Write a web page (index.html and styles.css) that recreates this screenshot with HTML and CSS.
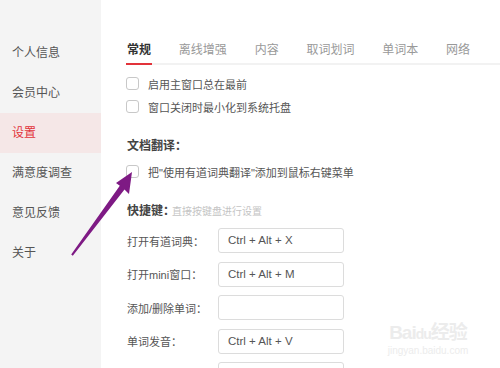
FILE: index.html
```html
<!DOCTYPE html>
<html>
<head>
    <title>设置</title>
    <meta charset="utf-8">
    <link rel="stylesheet" href="styles.css">
</head>
<body>
  <div class="page">
    <ul class="side">
      <li>个人信息</li>
      <li>会员中心</li>
      <li class="on">设置</li>
      <li>满意度调查</li>
      <li>意见反馈</li>
      <li>关于</li>
    </ul>

    <div class="main">
      <div class="tabs">
        <span class="tab active">常规</span>
        <span class="tab">离线增强</span>
        <span class="tab">内容</span>
        <span class="tab">取词划词</span>
        <span class="tab">单词本</span>
        <span class="tab">网络</span>
      </div>

      <div class="checks first">
        <label class="check"><i class="box"></i>启用主窗口总在最前</label>
        <label class="check"><i class="box"></i>窗口关闭时最小化到系统托盘</label>
      </div>

      <h3 class="title">文档翻译：</h3>
      <div class="checks">
        <label class="check"><i class="box"></i>把&quot;使用有道词典翻译&quot;添加到鼠标右键菜单</label>
      </div>

      <h3 class="title">快捷键：<span class="hint">直接按键盘进行设置</span></h3>
      <div class="keys">
        <div class="key-row"><span class="key-name">打开有道词典：</span><span class="key-input">Ctrl + Alt + X</span></div>
        <div class="key-row"><span class="key-name">打开mini窗口：</span><span class="key-input">Ctrl + Alt + M</span></div>
        <div class="key-row"><span class="key-name">添加/删除单词：</span><span class="key-input"></span></div>
        <div class="key-row"><span class="key-name">单词发音：</span><span class="key-input">Ctrl + Alt + V</span></div>
        <div class="key-row"><span class="key-name">截屏翻译：</span><span class="key-input"></span></div>
      </div>
    </div>

    <!-- overlays from the screenshot -->
    <svg class="arrow" width="500" height="368" viewBox="0 0 500 368">
      <polygon points="132,172 129,194 124.5,189.5 72.8,255.8 71.2,254.4 119.8,185.8 116,183" fill="#7e1a84"/>
    </svg>
    <div class="mark">
      <div class="mark-logo">Bai<b>du</b>经验</div>
      <div class="mark-url">jingyan.baidu.com</div>
    </div>
  </div>
</body>
</html>
```

FILE: styles.css
```css
body {
    margin: 0;
    background: #fff;
    font-family: "Liberation Sans", "Noto Sans CJK SC", sans-serif;
}

.page {
    position: relative;
    width: 500px;
    height: 368px;
    overflow: hidden;
    display: flex;
}

.side {
    width: 101px;
    flex: none;
    margin: 0;
    padding: 33px 0 0;
    list-style: none;
    background: #f4f4f4;
}
.side li {
    height: 40px;
    line-height: 40px;
    padding-left: 12px;
    font-size: 12px;
    color: #555;
}
.side li.on {
    background: #f5e7e7;
    color: #e2333a;
}

.main {
    flex: 1;
    padding: 40px 0 0 25px;
}

.tabs {
    display: flex;
    gap: 25.8px;
    border-bottom: 2px solid #f2f2f2;
}
.tab {
    font-size: 12px;
    line-height: 20px;
    padding: 0 1px 3px;
    margin-bottom: -2px;
    border-bottom: 2px solid transparent;
    color: #999;
}
.tab.active {
    color: #333;
    font-weight: bold;
    border-bottom-color: #e2333a;
}

.checks.first {
    margin-top: 7px;
}
.checks {
    margin-top: 4px;
}
.check {
    display: flex;
    align-items: center;
    height: 23px;
    font-size: 11px;
    color: #555;
}
.box {
    width: 11px;
    height: 11px;
    border: 1px solid #c8c8c8;
    border-radius: 3px;
    margin-right: 9px;
    background: #fff;
}

.title {
    margin: 18px 0 0 1px;
    font-size: 12px;
    line-height: 20px;
    font-weight: bold;
    color: #444;
}
.hint {
    margin-left: -3px;
    font-weight: normal;
    font-size: 10px;
    color: #c4c4c4;
}

.keys {
    margin-top: 6px;
    display: flex;
    flex-direction: column;
    gap: 8.5px;
}
.key-row {
    display: flex;
    align-items: center;
    height: 25px;
}
.key-name {
    width: 91px;
    padding-left: 1px;
    font-size: 11px;
    color: #555;
}
.key-input {
    box-sizing: border-box;
    width: 126px;
    height: 25px;
    line-height: 23px;
    padding-left: 9px;
    border: 1px solid #dcdcdc;
    border-radius: 3px;
    font-size: 11.5px;
    color: #555;
}

.arrow {
    position: absolute;
    left: 0;
    top: 0;
}

.mark {
    position: absolute;
    left: 383px;
    top: 322px;
    width: 90px;
    text-align: center;
    color: #ececec;
}
.mark-logo {
    font-size: 19px;
    font-weight: bold;
    line-height: 22px;
    letter-spacing: -1px;
}
.mark-logo b {
    font-size: 14px;
}
.mark-url {
    font-size: 10px;
    line-height: 12px;
}
```
